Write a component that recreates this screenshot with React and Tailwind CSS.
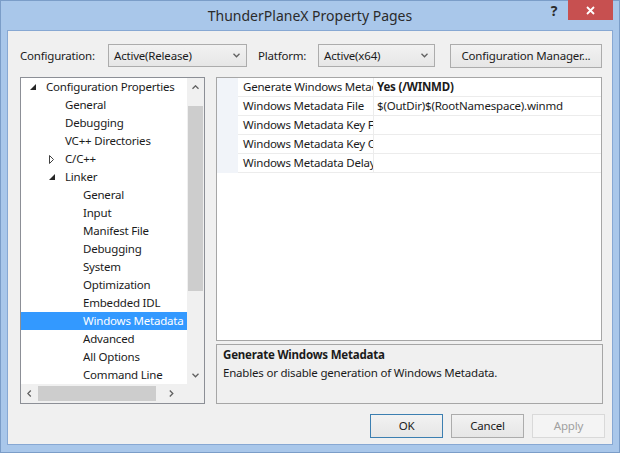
import React from "react";

const font = "font-['Noto_Sans',sans-serif]";

const Chevron = ({ dir = "down", className = "" }) => {
  const pts = {
    down: "0.5,0.8 3.5,3.8 6.5,0.8",
    up: "0.5,3.8 3.5,0.8 6.5,3.8",
    left: "3.8,0.5 0.8,3.5 3.8,6.5",
    right: "0.8,0.5 3.8,3.5 0.8,6.5",
  };
  const vertical = dir === "down" || dir === "up";
  return (
    <svg
      width={vertical ? 7 : 5}
      height={vertical ? 5 : 7}
      viewBox={vertical ? "0 0 7 5" : "0 0 5 7"}
      className={className}
    >
      <polyline points={pts[dir]} fill="none" stroke="#606060" strokeWidth="1.3" />
    </svg>
  );
};

const Expanded = () => (
  <svg width="6" height="6" viewBox="0 0 6 6">
    <polygon points="6,0 6,6 0,6" fill="#262626" />
  </svg>
);

const Collapsed = () => (
  <svg width="5" height="9" viewBox="0 0 5 9">
    <polygon points="0.5,0.5 4.5,4.5 0.5,8.5" fill="none" stroke="#404040" strokeWidth="1" />
  </svg>
);

const tree = [
  { lvl: 0, tri: "exp", text: "Configuration Properties" },
  { lvl: 1, text: "General" },
  { lvl: 1, text: "Debugging" },
  { lvl: 1, text: "VC++ Directories" },
  { lvl: 1, tri: "col", text: "C/C++" },
  { lvl: 1, tri: "exp", text: "Linker" },
  { lvl: 2, text: "General" },
  { lvl: 2, text: "Input" },
  { lvl: 2, text: "Manifest File" },
  { lvl: 2, text: "Debugging" },
  { lvl: 2, text: "System" },
  { lvl: 2, text: "Optimization" },
  { lvl: 2, text: "Embedded IDL" },
  { lvl: 2, text: "Windows Metadata", selected: true },
  { lvl: 2, text: "Advanced" },
  { lvl: 2, text: "All Options" },
  { lvl: 2, text: "Command Line" },
];

const indent = ["pl-[9px]", "pl-[28px]", "pl-[46px]"];

const props = [
  { name: "Generate Windows Metadata", value: "Yes (/WINMD)", bold: true },
  { name: "Windows Metadata File", value: "$(OutDir)$(RootNamespace).winmd" },
  { name: "Windows Metadata Key File", value: "" },
  { name: "Windows Metadata Key Container", value: "" },
  { name: "Windows Metadata Delay Sign", value: "" },
];

const Combo = ({ text, width }) => (
  <div
    className={`${width} h-[23px] flex items-center justify-between pl-[5px] pr-[6px] border border-[#acacac] bg-gradient-to-b from-[#f2f2f2] to-[#e6e6e6]`}
  >
    <span>{text}</span>
    <Chevron dir="down" />
  </div>
);

const Button = ({ children, primary, disabled }) => (
  <div
    className={`w-[73px] h-[24px] flex items-center justify-center border ${
      primary
        ? "border-[#3c7fb1] bg-gradient-to-b from-[#f2f2f2] to-[#e6e6e6]"
        : disabled
        ? "border-[#d9d9d9] bg-[#f4f4f4] text-[#a0a0a0]"
        : "border-[#acacac] bg-gradient-to-b from-[#f2f2f2] to-[#e6e6e6]"
    }`}
  >
    {children}
  </div>
);

export default function App() {
  return (
    <div
      className={`${font} w-[620px] h-[453px] bg-[#a9c7ea] border border-[#7b9dc8] px-[6px] pb-[7px] flex flex-col text-[11.5px] tracking-[-0.2px] text-[#1b1b1b] leading-[18px]`}
    >
      {/* title bar */}
      <div className="relative h-[29px] shrink-0">
        <div className="text-center text-[14px] tracking-normal leading-[20px] pt-[5px] text-[#2b2b2b]">
          ThunderPlaneX Property Pages
        </div>
        <div className="absolute top-[-1px] right-0 flex items-start">
          <div className="w-[20px] h-[22px] flex items-center justify-center text-[14px] font-bold text-[#2b2b2b]">
            ?
          </div>
          <div className="ml-[4px] w-[45px] h-[20px] bg-[#c75050] flex items-center justify-center">
            <svg width="9" height="9" viewBox="0 0 9 9">
              <path d="M1 1 L8 8 M8 1 L1 8" stroke="#fff" strokeWidth="1.8" />
            </svg>
          </div>
        </div>
      </div>

      {/* client */}
      <div className="flex-1 bg-[#f0f0f0] border border-[#87a8d3] pt-[13px] pl-[12px] flex flex-col">
        <div className="flex items-center h-[23px]">
          <span className="w-[88px]">Configuration:</span>
          <Combo text="Active(Release)" width="w-[139px]" />
          <span className="ml-[11px] w-[60px]">Platform:</span>
          <Combo text="Active(x64)" width="w-[117px]" />
          <div className="ml-[15px] w-[152px] h-[24px] flex items-center justify-center border border-[#acacac] bg-gradient-to-b from-[#f2f2f2] to-[#e6e6e6]">
            Configuration Manager...
          </div>
        </div>

        <div className="mt-[10px] h-[327px] flex">
          {/* tree */}
          <div className="w-[185px] h-full border border-[#8c8f96] bg-white flex flex-col">
            <div className="flex h-[306px]">
              <div className="w-[166px] overflow-hidden">
                {tree.map((t, i) => (
                  <div
                    key={i}
                    className={`h-[18px] flex items-center whitespace-nowrap ${indent[t.lvl]} ${
                      t.selected ? "bg-[#3399ff] text-white" : ""
                    }`}
                  >
                    <span className="w-[16px] shrink-0 flex items-center">
                      {t.tri === "exp" && <Expanded />}
                      {t.tri === "col" && <Collapsed />}
                    </span>
                    <span>{t.text}</span>
                  </div>
                ))}
              </div>
              <div className="w-[17px] bg-[#f0f0f0] flex flex-col items-center">
                <div className="h-[18px] flex items-center">
                  <Chevron dir="up" />
                </div>
                <div className="mt-[10px] w-[15px] h-[185px] bg-[#cdcdcd]" />
                <div className="flex-1" />
                <div className="h-[18px] flex items-center">
                  <Chevron dir="down" />
                </div>
              </div>
            </div>
            <div className="flex-1 flex">
              <div className="w-[166px] bg-[#f0f0f0] flex items-center">
                <div className="w-[17px] flex justify-center">
                  <Chevron dir="left" />
                </div>
                <div className="w-[118px] h-[15px] bg-[#cdcdcd]" />
                <div className="flex-1 flex justify-center">
                  <Chevron dir="right" />
                </div>
              </div>
              <div className="flex-1 bg-[#f0f0f0]" />
            </div>
          </div>

          {/* property grid + description */}
          <div className="ml-[11px] w-[387px] flex flex-col">
            <div className="w-[386px] h-[264px] border border-[#a6a6a6] bg-white">
              {props.map((p, i) => (
                <div key={i} className="flex h-[19px]">
                  <div className="w-[21px] bg-[#f1f4f9]" />
                  <div className="w-[136px] border-b border-r border-[#ececec] pl-[5px] overflow-hidden whitespace-nowrap">
                    {p.name}
                  </div>
                  <div
                    className={`flex-1 border-b border-[#ececec] pl-[3px] whitespace-nowrap ${
                      p.bold ? "font-bold" : ""
                    }`}
                  >
                    {p.value}
                  </div>
                </div>
              ))}
            </div>
            <div className="mt-[3px] h-[60px] border border-[#a6a6a6] bg-[#f0f0f0] pl-[6px] pt-[1px]">
              <div className="font-bold">Generate Windows Metadata</div>
              <div>Enables or disable generation of Windows Metadata.</div>
            </div>
          </div>
        </div>

        <div className="mt-[10px] flex justify-end gap-[8px] pr-[7px]">
          <Button primary>OK</Button>
          <Button>Cancel</Button>
          <Button disabled>Apply</Button>
        </div>
      </div>
    </div>
  );
}
